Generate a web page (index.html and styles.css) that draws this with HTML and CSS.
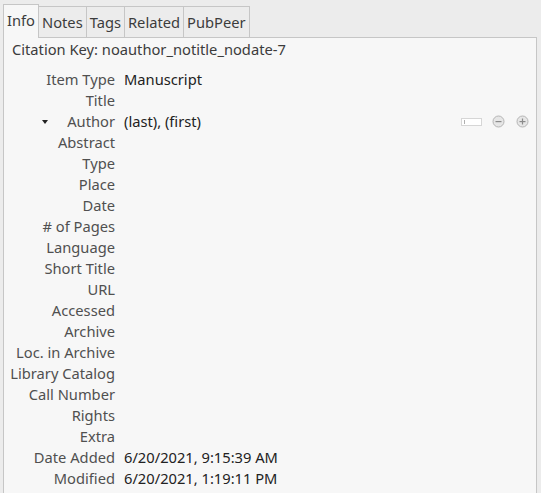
FILE: index.html
```html
<!DOCTYPE html>
<html>
<head>
<meta charset="utf-8">
<link rel="stylesheet" href="styles.css">
</head>
<body>
<div class="tabs">
  <div class="tab selected">Info</div>
  <div class="tab">Notes</div>
  <div class="tab">Tags</div>
  <div class="tab">Related</div>
  <div class="tab">PubPeer</div>
</div>
<div class="panel">
  <div class="citekey">Citation Key: noauthor_notitle_nodate-7</div>
  <div class="fields">
    <div class="label">Item Type</div><div class="value">Manuscript</div>
    <div class="label">Title</div><div class="value"></div>
    <div class="label author"><span class="twisty"></span>Author</div>
    <div class="value creator">
      <span>(last), (first)</span>
      <span class="controls">
        <span class="mini-input"><span class="caret"></span></span>
        <svg class="btn" width="13" height="13" viewBox="0 0 13 13"><circle cx="6.5" cy="6.5" r="5.5" fill="#e6e6e6" stroke="#b5b5b5"/><rect x="3.5" y="6" width="6" height="1.2" fill="#8a8a8a"/></svg>
        <svg class="btn" width="13" height="13" viewBox="0 0 13 13"><circle cx="6.5" cy="6.5" r="5.5" fill="#e6e6e6" stroke="#b5b5b5"/><rect x="3.5" y="6" width="6" height="1.2" fill="#8a8a8a"/><rect x="5.9" y="3.5" width="1.2" height="6" fill="#8a8a8a"/></svg>
      </span>
    </div>
    <div class="label">Abstract</div><div class="value"></div>
    <div class="label">Type</div><div class="value"></div>
    <div class="label">Place</div><div class="value"></div>
    <div class="label">Date</div><div class="value"></div>
    <div class="label"># of Pages</div><div class="value"></div>
    <div class="label">Language</div><div class="value"></div>
    <div class="label">Short Title</div><div class="value"></div>
    <div class="label">URL</div><div class="value"></div>
    <div class="label">Accessed</div><div class="value"></div>
    <div class="label">Archive</div><div class="value"></div>
    <div class="label">Loc. in Archive</div><div class="value"></div>
    <div class="label">Library Catalog</div><div class="value"></div>
    <div class="label">Call Number</div><div class="value"></div>
    <div class="label">Rights</div><div class="value"></div>
    <div class="label">Extra</div><div class="value"></div>
    <div class="label">Date Added</div><div class="value">6/20/2021, 9:15:39 AM</div>
    <div class="label">Modified</div><div class="value">6/20/2021, 1:19:11 PM</div>
  </div>
</div>
</body>
</html>
```

FILE: styles.css
```css
html, body {
  margin: 0;
  padding: 0;
  background: #ececec;
  font-family: "Noto Sans", "DejaVu Sans", sans-serif;
  font-size: 14.7px;
  overflow: hidden;
}
.tabs {
  display: flex;
  align-items: flex-end;
  padding-left: 3px;
  padding-top: 4px;
  height: 33px;
  position: relative;
  z-index: 2;
}
.tab {
  height: 31px;
  box-sizing: border-box;
  border-top: 1px solid #c6c6c6;
  border-right: 1px solid #c6c6c6;
  padding: 0 3px 1px 3px;
  display: flex;
  align-items: center;
  color: #3c3c3c;
  background: #ececec;
}
.tab.selected {
  height: 34px;
  border-left: 1px solid #c6c6c6;
  background: #f7f7f7;
  margin-bottom: -1px;
  padding: 0 3px 4px 3px;
  color: #3c3c3c;
}
.panel {
  margin-left: 3px;
  width: 534px;
  box-sizing: border-box;
  height: 470px;
  border: 1px solid #c6c6c6;
  border-bottom: none;
  background: #f7f7f7;
  position: relative;
  z-index: 1;
}
.citekey {
  padding: 2px 0 0 8px;
  height: 19px;
  color: #3c3c3c;
  line-height: 19px;
}
.fields {
  margin-top: 10px;
  display: grid;
  grid-template-columns: 111px 1fr;
  column-gap: 9px;
  grid-auto-rows: 21px;
  line-height: 21px;
}
.label {
  text-align: right;
  color: #505050;
  white-space: nowrap;
}
.label.author {
  display: flex;
  justify-content: flex-end;
  align-items: center;
}
.twisty {
  width: 0;
  height: 0;
  border-left: 3.5px solid transparent;
  border-right: 3.5px solid transparent;
  border-top: 4px solid #222;
  margin-right: auto;
  margin-left: 38px;
}
.value {
  color: #222;
  white-space: nowrap;
}
.creator {
  display: flex;
  align-items: center;
}
.controls {
  margin-left: auto;
  margin-right: 7px;
  display: flex;
  align-items: center;
}
.mini-input {
  width: 21px;
  height: 8px;
  box-sizing: border-box;
  border: 1px solid #d6d6d6;
  background: #fff;
  margin-right: 10px;
  display: flex;
  align-items: center;
  padding-left: 2px;
}
.caret {
  width: 1px;
  height: 4px;
  background: #b0b0b0;
}
.btn {
  margin-right: 11px;
}
.btn:last-child {
  margin-right: 0;
}
```
